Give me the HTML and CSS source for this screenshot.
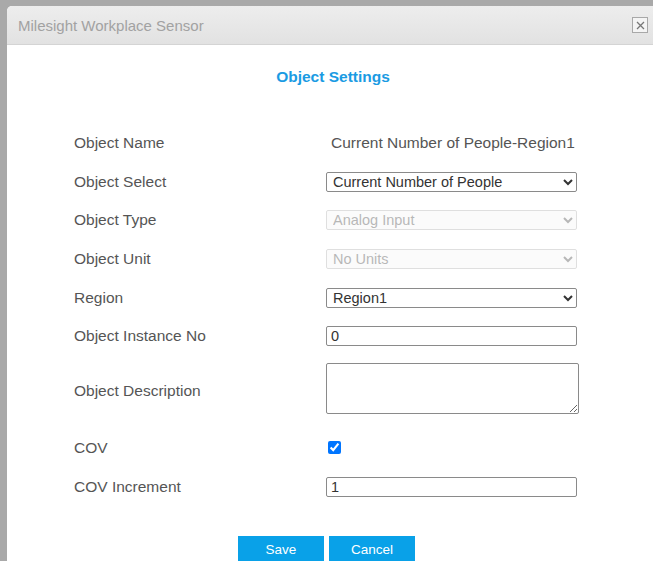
FILE: index.html
```html
<!DOCTYPE html>
<html lang="en">
<head>
  <meta charset="UTF-8" />
  <meta name="viewport" content="width=device-width, initial-scale=1.0" />
  <title>Milesight Workplace Sensor</title>
  <link rel="stylesheet" href="styles.css">
</head>
<body>
  <div class="dialog">
    <div class="dialog-head">
      <span class="dialog-title">Milesight Workplace Sensor</span>
      <button class="close-btn" title="Close">
        <svg width="9" height="9" viewBox="0 0 9 9"><path d="M1 1L8 8M8 1L1 8" stroke="#777" stroke-width="1.3"/></svg>
      </button>
    </div>

    <div class="dialog-body">
      <h2 class="section-title">Object Settings</h2>

      <div class="form">
        <div class="row">
          <label>Object Name</label>
          <span class="value">Current Number of People-Region1</span>
        </div>
        <div class="row">
          <label>Object Select</label>
          <select class="field">
            <option>Current Number of People</option>
          </select>
        </div>
        <div class="row">
          <label>Object Type</label>
          <select class="field" disabled>
            <option>Analog Input</option>
          </select>
        </div>
        <div class="row">
          <label>Object Unit</label>
          <select class="field" disabled>
            <option>No Units</option>
          </select>
        </div>
        <div class="row">
          <label>Region</label>
          <select class="field">
            <option>Region1</option>
          </select>
        </div>
        <div class="row">
          <label>Object Instance No</label>
          <input class="field" type="text" value="0">
        </div>
        <div class="row row-desc">
          <label>Object Description</label>
          <textarea class="field desc"></textarea>
        </div>
        <div class="row row-cov">
          <label>COV</label>
          <input class="check" type="checkbox" checked>
        </div>
        <div class="row row-inc">
          <label>COV Increment</label>
          <input class="field" type="text" value="1">
        </div>
      </div>

      <div class="actions">
        <button class="btn">Save</button>
        <button class="btn">Cancel</button>
      </div>
    </div>
  </div>
</body>
</html>
```

FILE: styles.css
```css
html, body {
  height: 100%;
}
body {
  margin: 0;
  padding: 6px 0 0 7px;
  box-sizing: border-box;
  background: #a9a9a9;
  font-family: "Liberation Sans", Arial, sans-serif;
  overflow: hidden;
}
.dialog {
  width: 652px;
  height: 600px;
  background: #fff;
  border-top-left-radius: 5px;
  overflow: hidden;
}
.dialog-head {
  display: flex;
  align-items: center;
  justify-content: space-between;
  height: 38px;
  padding: 0 11px 0 11px;
  background: linear-gradient(#ededed, #e2e2e2);
  border-bottom: 1px solid #d4d4d4;
}
.dialog-title {
  font-size: 15px;
  color: #a2a2a2;
}
.close-btn {
  display: flex;
  align-items: center;
  justify-content: center;
  width: 16px;
  height: 16px;
  padding: 0;
  background: #f4f4f4;
  border: 1px solid #a8a8a8;
  border-radius: 0;
}
.dialog-body {
  padding-top: 23px;
}
.section-title {
  margin: 0;
  text-align: center;
  font-size: 15.5px;
  font-weight: bold;
  color: #1a9be3;
  line-height: 18px;
}
.form {
  padding: 38px 0 0 67px;
}
.row {
  display: flex;
  align-items: center;
  height: 38.6px;
}
.row label {
  width: 252px;
  font-size: 15.5px;
  color: #555;
}
.value {
  padding-left: 5px;
  font-size: 15.5px;
  color: #555;
}
.field {
  box-sizing: border-box;
  width: 251px;
  height: 20px;
  margin: 0;
  padding: 0 4px;
  font-family: inherit;
  font-size: 14.5px;
  color: #333;
  background: #fff;
  border: 1px solid #8a8a8a;
  border-radius: 2px;
}
select.field {
  padding: 0 2px;
}
.field:disabled {
  color: #9a9a9a;
  background: #fafafa;
  border-color: #d2d2d2;
}
.desc {
  width: 253px;
  height: 51px;
  margin-top: -5px;
  resize: vertical;
}
.row-desc {
  height: 71px;
}
.row-cov {
  height: 43px;
}
.row-inc {
  height: 34px;
}
.check {
  width: 13px;
  height: 13px;
  margin: 0 0 0 2px;
  position: relative;
  top: -1px;
}
.actions {
  display: flex;
  gap: 5px;
  padding: 32px 0 0 231px;
}
.btn {
  width: 86px;
  height: 27px;
  padding: 0;
  background: #09a1e8;
  color: #fff;
  border: none;
  font-family: "Liberation Sans", Arial, sans-serif;
  font-size: 13.5px;
}
```
